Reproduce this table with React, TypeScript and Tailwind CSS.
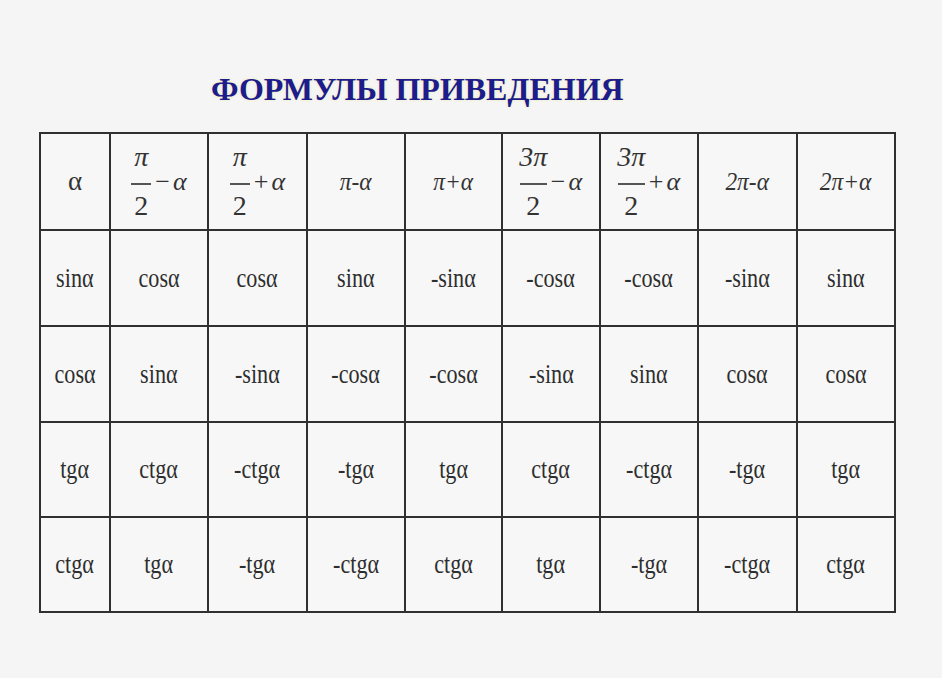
import React from "react";

const rows: string[][] = [
  ["sinα", "cosα", "cosα", "sinα", "-sinα", "-cosα", "-cosα", "-sinα", "sinα"],
  ["cosα", "sinα", "-sinα", "-cosα", "-cosα", "-sinα", "sinα", "cosα", "cosα"],
  ["tgα", "ctgα", "-ctgα", "-tgα", "tgα", "ctgα", "-ctgα", "-tgα", "tgα"],
  ["ctgα", "tgα", "-tgα", "-ctgα", "ctgα", "tgα", "-tgα", "-ctgα", "ctgα"],
];

function Frac({ num, op, wide }: { num: string; op: string; wide?: boolean }) {
  return (
    <div className="flex items-center italic text-[26px] leading-none text-[#333]">
      <div className={"flex flex-col items-center " + (wide ? "w-[27px]" : "w-[20px]")}>
        <span className="text-[28px] pb-[12px]">{num}</span>
        <span className="block h-[2px] w-full bg-[#555]" />
        <span className="not-italic pt-[7px] text-[28px]">2</span>
      </div>
      <span className="ml-[4px] not-italic">{op === "-" ? "−" : "+"}</span>
      <span className="ml-[3px]">α</span>
    </div>
  );
}

function Plain({ text }: { text: string }) {
  return <span className="inline-block italic text-[26px] leading-none text-[#333] scale-x-[0.9]">{text}</span>;
}

const headers: React.ReactNode[] = [
  <span className="text-[27px] leading-none text-[#333]">α</span>,
  <Frac num="π" op="-" />,
  <Frac num="π" op="+" />,
  <Plain text="π-α" />,
  <Plain text="π+α" />,
  <Frac num="3π" op="-" wide />,
  <Frac num="3π" op="+" wide />,
  <Plain text="2π-α" />,
  <Plain text="2π+α" />,
];

export default function App() {
  return (
    <div
      className="w-[942px] h-[678px] bg-[#f5f5f5] flex flex-col"
      style={{ fontFamily: '"Liberation Serif", "DejaVu Serif", serif' }}
    >
      <div className="h-[132px] flex items-start">
        <h1 className="mt-[69px] ml-[211px] text-[32px] leading-[40px] font-bold text-[#1c1c8c] [text-shadow:0_0_3px_rgba(240,230,170,0.9)]">
          ФОРМУЛЫ ПРИВЕДЕНИЯ
        </h1>
      </div>
      <div className="ml-[39px] w-fit bg-[#303030] p-[2px] grid grid-cols-[68px_96px_97px_96px_95px_96px_96px_97px_96px] grid-rows-[95px_94px_94px_93px_93px] gap-[2px]">
        {headers.map((h, i) => (
          <div key={"h" + i} className="bg-[#f7f7f7] flex items-center justify-center">
            {h}
          </div>
        ))}
        {rows.map((r, ri) =>
          r.map((c, ci) => (
            <div key={ri + "-" + ci} className="bg-[#f7f7f7] flex items-center justify-center">
              <span className="inline-block text-[27px] leading-none text-[#2e2e2e] scale-x-[0.82]">{c}</span>
            </div>
          ))
        )}
      </div>
    </div>
  );
}
